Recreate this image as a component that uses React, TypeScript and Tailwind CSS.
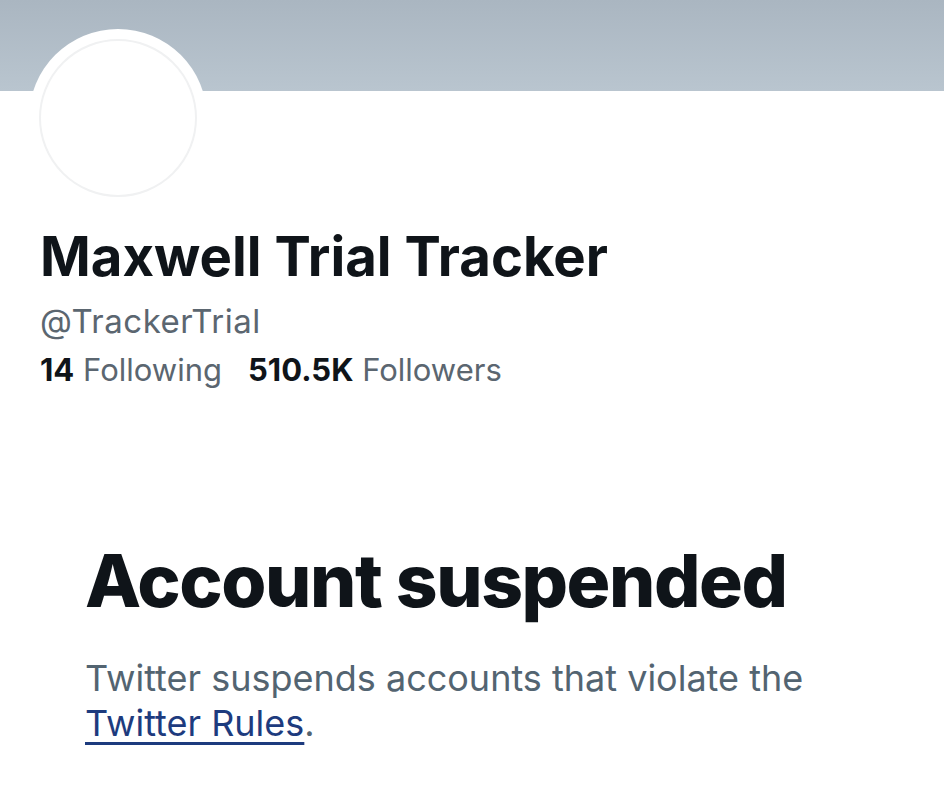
import React from 'react';

const font = { fontFamily: 'Inter, "Liberation Sans", sans-serif' };

const App: React.FC = () => {
  return (
    <div className="w-[944px] h-[798px] overflow-hidden bg-white" style={font}>
      {/* banner */}
      <div className="h-[91px] bg-gradient-to-b from-[#aab6c1] to-[#b9c5cf]" />

      {/* avatar */}
      <div className="-mt-[62px] ml-[29px] w-[178px] h-[178px] rounded-full bg-white flex items-center justify-center">
        <div className="w-[158px] h-[158px] rounded-full border-2 border-[#f0f1f2] bg-white" />
      </div>

      {/* profile info */}
      <div className="pl-[40px]">
        <h1 className="mt-[17px] text-[54.5px] leading-[64px] font-bold text-[#0f1419]">Maxwell Trial Tracker</h1>
        <p className="mt-[13px] text-[33px] leading-[40px] tracking-[0.5px] text-[#5b6670]">@TrackerTrial</p>
        <div className="mt-[10px] flex gap-[26px] text-[31px] leading-[38px]">
          <span>
            <span className="font-bold text-[#0f1419]">14</span>
            <span className="text-[#5b6670]"> Following</span>
          </span>
          <span>
            <span className="font-bold text-[#0f1419]">510.5K</span>
            <span className="text-[#5b6670]"> Followers</span>
          </span>
        </div>
      </div>

      {/* suspended notice */}
      <div className="pl-[85px] pr-[60px]">
        <h2 className="mt-[150px] text-[73px] leading-[84px] tracking-[-0.02em] font-extrabold text-[#0f1419]">Account suspended</h2>
        <p className="mt-[33px] text-[36px] leading-[45px] text-[#536471]">
          Twitter suspends accounts that violate the{' '}
          <a href="#" className="text-[#1d3b7e] underline decoration-[3px] underline-offset-[6px]">Twitter Rules</a>.
        </p>
      </div>
    </div>
  );
};

export default App;
